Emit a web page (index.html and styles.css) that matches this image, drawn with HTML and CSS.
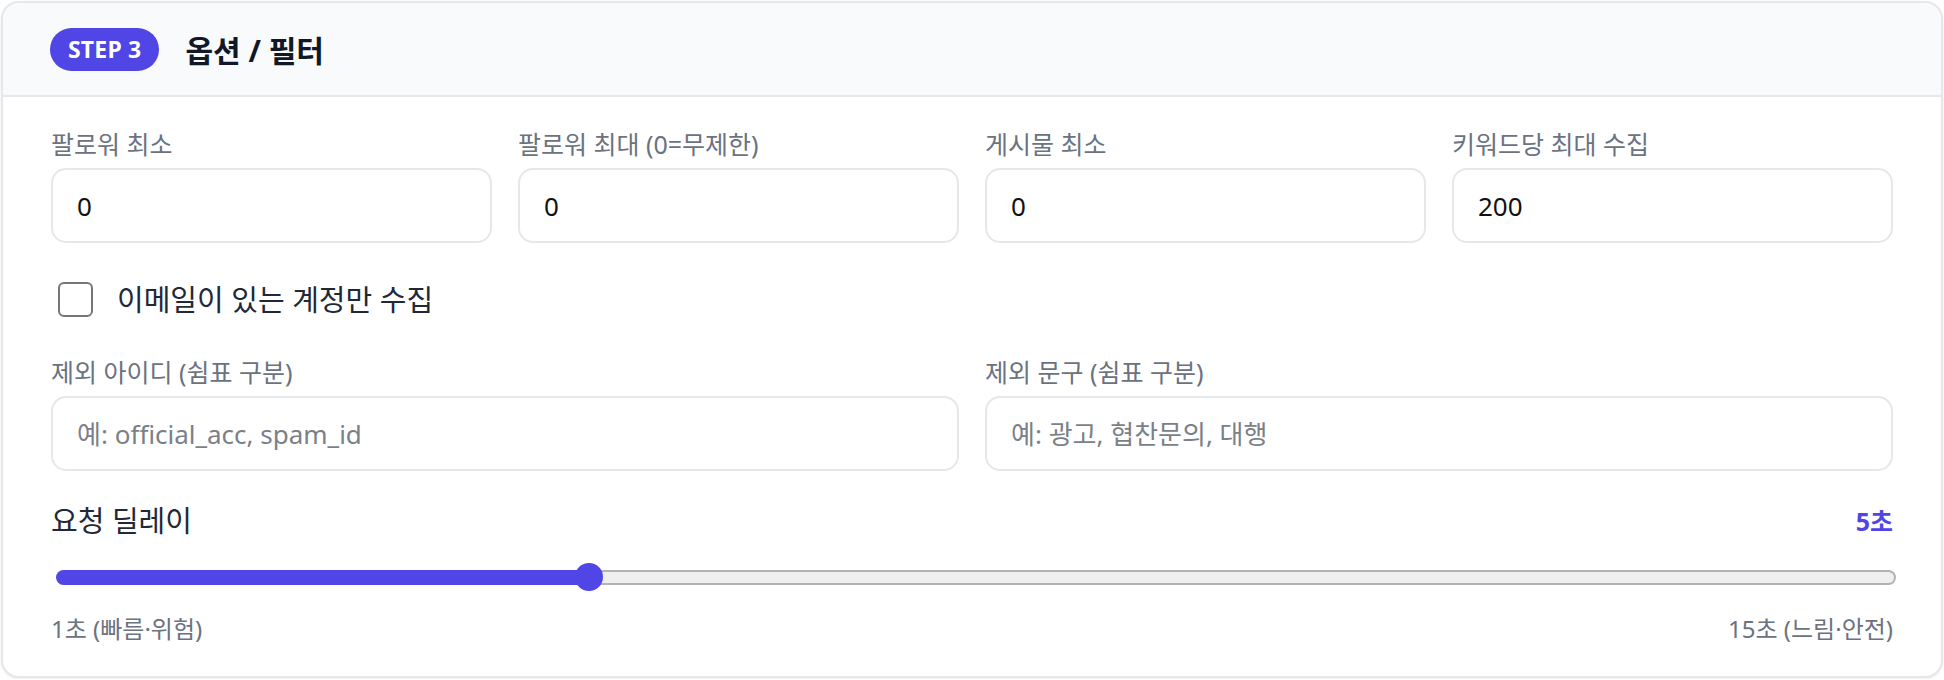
FILE: index.html
```html
<!DOCTYPE html>
<html lang="ko">
<head>
  <meta charset="UTF-8">
  <meta name="viewport" content="width=device-width, initial-scale=1.0">
  <title>옵션 / 필터</title>
  <link rel="stylesheet" href="styles.css">
</head>
<body>
  <section class="card">
    <div class="card-head">
      <span class="step">STEP 3</span>
      <h2>옵션 / 필터</h2>
    </div>

    <div class="card-body">
      <div class="grid four">
        <label class="field">
          <span class="field-label">팔로워 최소</span>
          <input type="number" value="0">
        </label>
        <label class="field">
          <span class="field-label">팔로워 최대 (0=무제한)</span>
          <input type="number" value="0">
        </label>
        <label class="field">
          <span class="field-label">게시물 최소</span>
          <input type="number" value="0">
        </label>
        <label class="field">
          <span class="field-label">키워드당 최대 수집</span>
          <input type="number" value="200">
        </label>
      </div>

      <label class="check">
        <input type="checkbox">
        <span>이메일이 있는 계정만 수집</span>
      </label>

      <div class="grid two">
        <label class="field">
          <span class="field-label">제외 아이디 (쉼표 구분)</span>
          <input type="text" placeholder="예: official_acc, spam_id">
        </label>
        <label class="field">
          <span class="field-label">제외 문구 (쉼표 구분)</span>
          <input type="text" placeholder="예: 광고, 협찬문의, 대행">
        </label>
      </div>

      <div class="delay">
        <div class="delay-head">
          <span>요청 딜레이</span>
          <strong>5초</strong>
        </div>
        <input class="slider" type="range" min="1" max="15" value="5" style="--pct: 0.2857">
        <div class="delay-scale">
          <span>1초 (빠름·위험)</span>
          <span>15초 (느림·안전)</span>
        </div>
      </div>
    </div>
  </section>
</body>
</html>
```

FILE: styles.css
```css
:root {
  --indigo: #4f46e5;
  --border: #e5e7eb;
  --muted: #6b7280;
  --text: #1f2937;
}

* {
  box-sizing: border-box;
}

body {
  margin: 0;
  font-family: "Noto Sans", "Noto Sans CJK KR", sans-serif;
  color: var(--text);
  background: #fff;
}

.card {
  margin: 1px;
  border: 2px solid var(--border);
  border-radius: 18px;
  background: #fff;
  box-shadow: 0 1px 3px rgba(0, 0, 0, 0.08);
  overflow: hidden;
}

.card-head {
  height: 94px;
  display: flex;
  align-items: center;
  gap: 26px;
  padding: 0 47px;
  background: #f9fafb;
  border-bottom: 2px solid var(--border);
}

.step {
  height: 43px;
  display: inline-flex;
  align-items: center;
  padding: 0 18px;
  border-radius: 22px;
  background: var(--indigo);
  color: #fff;
  font-size: 23px;
  font-weight: 700;
  letter-spacing: 0.2px;
}

.card-head h2 {
  margin: 0;
  font-size: 30px;
  font-weight: 700;
  color: #111827;
}

.card-body {
  padding: 32px 48px 33px;
}

.grid {
  display: grid;
  gap: 26px;
}

.grid.four {
  grid-template-columns: repeat(4, 1fr);
}

.grid.two {
  grid-template-columns: repeat(2, 1fr);
  margin-top: 40px;
}

.field {
  display: flex;
  flex-direction: column;
  gap: 9px;
}

.field-label {
  font-size: 25px;
  line-height: 30px;
  color: var(--muted);
}

.field input {
  height: 75px;
  padding: 0 24px;
  border: 2px solid var(--border);
  border-radius: 15px;
  font: inherit;
  font-size: 26px;
  color: #111;
  background: #fff;
  outline: none;
}

.field input::placeholder {
  color: #7b7f87;
}

.check {
  display: flex;
  align-items: center;
  gap: 24px;
  margin-top: 39px;
  padding-left: 7px;
  font-size: 29px;
  line-height: 35px;
  color: var(--text);
}

.check input {
  appearance: none;
  -webkit-appearance: none;
  width: 35px;
  height: 35px;
  margin: 0;
  border: 2px solid #767676;
  border-radius: 6px;
  background: #fff;
}

.delay {
  margin-top: 32px;
}

.delay-head {
  display: flex;
  justify-content: space-between;
  align-items: center;
  font-size: 29px;
  line-height: 36px;
}

.delay-head strong {
  font-size: 25px;
  color: var(--indigo);
}

.slider {
  -webkit-appearance: none;
  appearance: none;
  display: block;
  width: calc(100% - 2px);
  height: 28px;
  margin: 24px 0 0 5px;
  background: transparent;
  --fill: calc(14px + (100% - 28px) * var(--pct));
}

.slider::-webkit-slider-runnable-track {
  box-sizing: border-box;
  height: 15px;
  border: 2px solid transparent;
  border-radius: 8px;
  background:
    linear-gradient(to right, var(--indigo) var(--fill), transparent var(--fill)) border-box,
    linear-gradient(#efefef, #efefef) padding-box,
    linear-gradient(#b2b2b2, #b2b2b2) border-box;
}

.slider::-webkit-slider-thumb {
  -webkit-appearance: none;
  width: 28px;
  height: 28px;
  margin-top: -8.5px;
  border-radius: 50%;
  border: none;
  background: var(--indigo);
}

.delay-scale {
  display: flex;
  justify-content: space-between;
  margin-top: 24px;
  font-size: 24px;
  line-height: 28px;
  color: var(--muted);
}
```
